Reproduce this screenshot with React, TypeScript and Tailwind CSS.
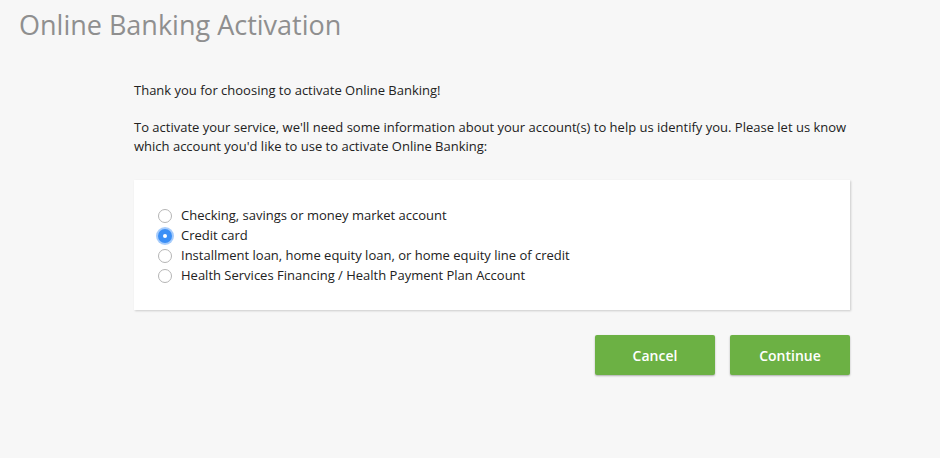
import { useState } from 'react'

const options = [
  'Checking, savings or money market account',
  'Credit card',
  'Installment loan, home equity loan, or home equity line of credit',
  'Health Services Financing / Health Payment Plan Account',
]

export default function App() {
  const [selected, setSelected] = useState(1)

  return (
    <div className="min-h-[458px] bg-[#f7f7f7] font-['Open_Sans',sans-serif] text-[#222]">
      {/* Page title */}
      <h1 className="pl-[19px] pt-[6px] text-[27px] leading-[38px] text-[#8f8f8f]">
        Online Banking Activation
      </h1>

      <div className="ml-[134px] w-[716px] pt-[37px]">
        <p className="text-[13px] leading-[19px]">Thank you for choosing to activate Online Banking!</p>
        <p className="mt-[18px] text-[13px] leading-[19px]">
          To activate your service, we'll need some information about your account(s) to help us identify you. Please let us know
          which account you'd like to use to activate Online Banking:
        </p>

        {/* Account type card */}
        <div className="mt-[24px] bg-white px-6 pt-[26px] pb-[24px] shadow-[1px_1px_2px_rgba(0,0,0,0.18)]">
          {options.map((label, i) => (
            <label key={label} className="flex h-5 cursor-pointer items-center gap-[9px] text-[13px]">
              <span
                className={
                  i === selected
                    ? 'flex h-[14px] w-[14px] items-center justify-center rounded-full bg-[#3b8ff6] shadow-[0_0_0_2px_rgba(59,143,246,0.45)]'
                    : 'h-[14px] w-[14px] rounded-full border border-[#b5b5b5] bg-white'
                }
                onClick={() => setSelected(i)}
              >
                {i === selected && <span className="h-[4px] w-[4px] rounded-full bg-white" />}
              </span>
              {label}
            </label>
          ))}
        </div>

        {/* Actions */}
        <div className="mt-[25px] flex justify-end gap-[15px]">
          <button className="h-10 w-[120px] rounded-[2px] bg-[#6cb144] text-[14px] font-semibold text-white shadow-[0_1px_2px_rgba(0,0,0,0.3)]">
            Cancel
          </button>
          <button className="h-10 w-[120px] rounded-[2px] bg-[#6cb144] text-[14px] font-semibold text-white shadow-[0_1px_2px_rgba(0,0,0,0.3)]">
            Continue
          </button>
        </div>
      </div>
    </div>
  )
}
